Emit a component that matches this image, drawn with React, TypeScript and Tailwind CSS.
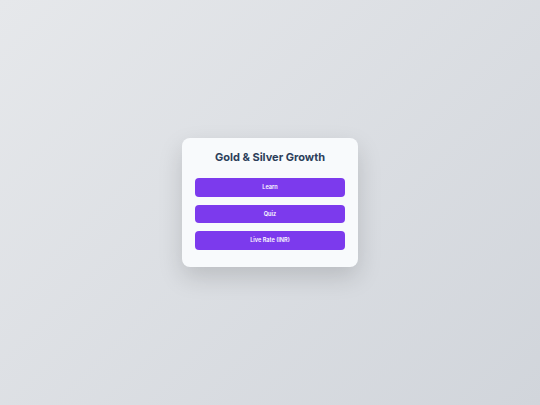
export default function App() {
  const items = ["Learn", "Quiz", "Live Rate (INR)"];
  return (
    <div className="flex h-[405px] w-full items-center justify-center bg-[linear-gradient(135deg,#e6e8eb,#d1d5db)] font-['Inter',sans-serif]">
      <div className="w-[176px] rounded-[8px] bg-[#f8fafc] px-[13px] pt-[12px] pb-[17.5px] shadow-[0_10px_25px_rgba(0,0,0,0.15)]">
        <h1 className="text-center text-[11px] font-bold leading-[14px] text-[#2c3e5a]">
          Gold &amp; Silver Growth
        </h1>
        <div className="mt-[14px] flex flex-col gap-[8px]">
          {items.map((label) => (
            <button
              key={label}
              className="h-[18.5px] w-full rounded-[4px] bg-[#7c3aed] text-[5.6px] font-semibold text-white"
            >
              {label}
            </button>
          ))}
        </div>
      </div>
    </div>
  );
}
